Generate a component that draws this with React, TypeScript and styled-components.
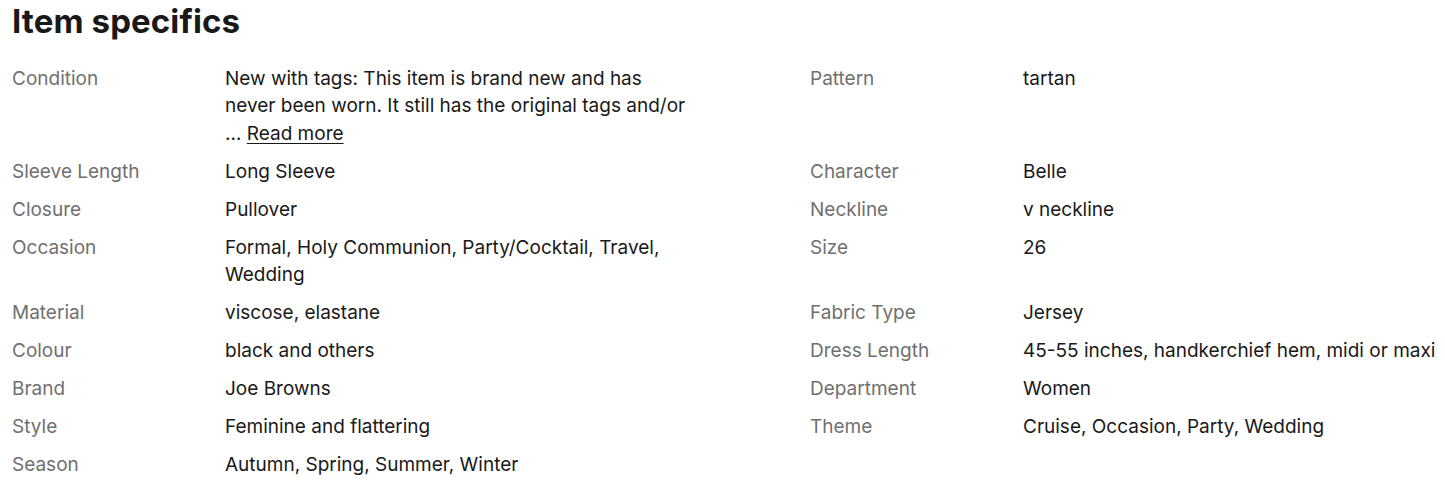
import React from "react";
import styled, { createGlobalStyle } from "styled-components";

const GlobalStyle = createGlobalStyle`
  body {
    margin: 0;
    background: #ffffff;
    font-family: Inter, "Open Sans", Arial, sans-serif;
  }
`;

const Section = styled.section`
  padding: 0 0 0 12px;
`;

const Heading = styled.h2`
  margin: 0;
  padding-top: 1px;
  font-size: 33px;
  line-height: 40px;
  font-weight: 700;
  color: #191919;
  letter-spacing: 0.1px;
`;

const Grid = styled.div`
  display: grid;
  grid-template-columns: 213px 585px 213px 1fr;
  row-gap: 10.5px;
  margin-top: 23.5px;
  font-size: 19px;
  line-height: 27.5px;
`;

const Label = styled.div`
  color: #707070;
`;

const Value = styled.div<{ $wrap?: number }>`
  color: #191919;
  padding-right: ${(p) => p.$wrap ?? 0}px;
`;

const ReadMore = styled.a`
  color: #191919;
  text-decoration: underline;
  text-underline-offset: 3px;
  cursor: pointer;
`;

type Spec = { label: string; value: React.ReactNode };

const rows: [Spec, Spec | null][] = [
  [
    {
      label: "Condition",
      value: (
        <>
          New with tags: This item is brand new and has never been worn. It
          still has the original tags and/or
          <br />… <ReadMore>Read more</ReadMore>
        </>
      ),
    },
    { label: "Pattern", value: "tartan" },
  ],
  [
    { label: "Sleeve Length", value: "Long Sleeve" },
    { label: "Character", value: "Belle" },
  ],
  [
    { label: "Closure", value: "Pullover" },
    { label: "Neckline", value: "v neckline" },
  ],
  [
    {
      label: "Occasion",
      value: "Formal, Holy Communion, Party/Cocktail, Travel, Wedding",
    },
    { label: "Size", value: "26" },
  ],
  [
    { label: "Material", value: "viscose, elastane" },
    { label: "Fabric Type", value: "Jersey" },
  ],
  [
    { label: "Colour", value: "black and others" },
    { label: "Dress Length", value: "45-55 inches, handkerchief hem, midi or maxi" },
  ],
  [
    { label: "Brand", value: "Joe Browns" },
    { label: "Department", value: "Women" },
  ],
  [
    { label: "Style", value: "Feminine and flattering" },
    { label: "Theme", value: "Cruise, Occasion, Party, Wedding" },
  ],
  [{ label: "Season", value: "Autumn, Spring, Summer, Winter" }, null],
];

const App = () => {
  return (
    <Section>
      <GlobalStyle />
      <Heading>Item specifics</Heading>
      <Grid>
        {rows.map(([left, right]) => (
          <React.Fragment key={left.label}>
            <Label>{left.label}</Label>
            <Value $wrap={119}>{left.value}</Value>
            <Label>{right ? right.label : ""}</Label>
            <Value>{right ? right.value : ""}</Value>
          </React.Fragment>
        ))}
      </Grid>
    </Section>
  );
};

export default App;
